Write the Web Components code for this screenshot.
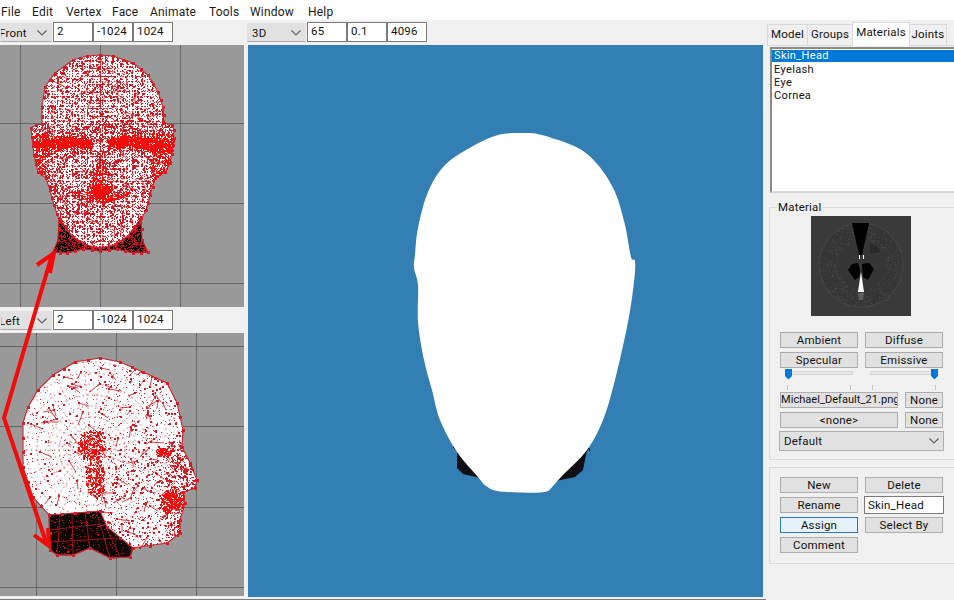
<!DOCTYPE html>
<html>
<head>
<meta charset="utf-8">
<title>Milkshape</title>
<style>
  html, body { margin: 0; height: 100%; overflow: hidden; background: #f0f0f0; }
</style>
</head>
<body>
<app-window>
  <menu-bar slot="menu" items="File,Edit,Vertex,Face,Animate,Tools,Window,Help"></menu-bar>

  <view-toolbar slot="left">
    <combo-box label="Front" width="52" cut></combo-box>
    <num-field value="2"></num-field><num-field value="-1024"></num-field><num-field value="1024"></num-field>
  </view-toolbar>
  <mesh-view slot="left" kind="front" style="height:262px"></mesh-view>
  <view-toolbar slot="left" style="height:26px;padding-top:3px">
    <combo-box label="Left" width="52" cut></combo-box>
    <num-field value="2"></num-field><num-field value="-1024"></num-field><num-field value="1024"></num-field>
  </view-toolbar>
  <mesh-view slot="left" kind="side" style="height:263px"></mesh-view>

  <view-toolbar slot="center">
    <combo-box label="3D" width="59" style="margin-left:-1px"></combo-box>
    <num-field value="65"></num-field><num-field value="0.1"></num-field><num-field value="4096"></num-field>
  </view-toolbar>
  <head-preview slot="center"></head-preview>

  <side-panel slot="right">
    <tab-strip tabs="Model,Groups,Materials,Joints" active="Materials"></tab-strip>
    <list-box items="Skin_Head,Eyelash,Eye,Cornea" selected="Skin_Head"></list-box>
    <group-box legend="Material" style="margin-top:8px">
      <texture-thumb></texture-thumb>
      <button-grid style="margin-top:16px">
        <push-button>Ambient</push-button><push-button>Diffuse</push-button>
        <push-button>Specular</push-button><push-button>Emissive</push-button>
      </button-grid>
      <button-grid gap="0">
        <track-slider value="0"></track-slider><track-slider value="1"></track-slider>
      </button-grid>
      <button-grid cols="118px 38px">
        <push-button fit>Michael_Default_21.png</push-button><push-button>None</push-button>
        <push-button>&lt;none&gt;</push-button><push-button>None</push-button>
      </button-grid>
      <combo-box label="Default" width="165" style="margin:3px 0 8px -1px"></combo-box>
    </group-box>
    <group-box style="margin-top:7px;--pad:9px 0 10px 10px">
      <button-grid>
        <push-button>New</push-button><push-button>Delete</push-button>
        <push-button>Rename</push-button><num-field value="Skin_Head" width="80" style="height:18px;margin:-1px"></num-field>
        <push-button focused>Assign</push-button><push-button>Select By</push-button>
        <push-button>Comment</push-button>
      </button-grid>
    </group-box>
  </side-panel>

  <arrow-overlay slot="overlay"></arrow-overlay>
</app-window>

<script>
const UI_FONT = 'Roboto, "Liberation Sans", sans-serif';

function shadow(el, html) {
  el.attachShadow({ mode: 'open' }).innerHTML = html;
}

// little seeded generator so the wireframe is the same on every load
function seeded(a) {
  return () => {
    a = (a + 0x6D2B79F5) | 0;
    let t = Math.imul(a ^ (a >>> 15), 1 | a);
    t = (t + Math.imul(t ^ (t >>> 7), 61 | t)) ^ t;
    return ((t ^ (t >>> 14)) >>> 0) / 4294967296;
  };
}

function inside(poly, x, y) {
  let hit = false;
  for (let i = 0, j = poly.length - 1; i < poly.length; j = i++) {
    const [xi, yi] = poly[i], [xj, yj] = poly[j];
    if ((yi > y) !== (yj > y) && x < (xj - xi) * (y - yi) / (yj - yi) + xi) hit = !hit;
  }
  return hit;
}

function polyPath(poly) {
  return 'M' + poly.map(p => p.join(' ')).join('L') + 'Z';
}

function smoothPath(p) {
  const n = p.length;
  let d = `M${p[0][0]} ${p[0][1]}`;
  for (let i = 0; i < n; i++) {
    const a = p[(i - 1 + n) % n], b = p[i], c = p[(i + 1) % n], e = p[(i + 2) % n];
    d += `C${(b[0] + (c[0] - a[0]) / 6).toFixed(1)} ${(b[1] + (c[1] - a[1]) / 6).toFixed(1)} ` +
         `${(c[0] - (e[0] - b[0]) / 6).toFixed(1)} ${(c[1] - (e[1] - b[1]) / 6).toFixed(1)} ${c[0]} ${c[1]}`;
  }
  return d + 'Z';
}

const blob = (x, y, cx, cy, rx, ry) => ((x - cx) / rx) ** 2 + ((y - cy) / ry) ** 2 < 1;

const FRONT = {
  grid: { xs: [20, 100, 180], ys: [123, 203, 283] },
  box: '0 45 244 262',
  head: [[100,55],[113,56],[133,63],[148,75],[158,92],[163,107],[164,123],[172,125],[174,130],[173,145],[170,163],[165,172],[155,178],[150,195],[146,210],[140,222],[128,236],[115,245],[100,248],[85,245],[72,236],[60,222],[54,205],[50,190],[46,178],[38,172],[34,155],[31,128],[36,125],[42,124],[42,107],[45,87],[55,73],[73,60],[87,56]],
  neck: [[59,218],[72,236],[85,245],[100,248],[115,245],[128,236],[141,218],[142,240],[148,252],[133,253],[117,249],[100,251],[83,249],[67,253],[53,252],[58,240]],
  neckDots: 0.42,
  solid: 0.9,
  density(x, y) {
    let d = y < 120 ? 0.21 : 0.33;
    if ((x < 50 || x > 150) && y > 122 && y < 180) d = 0.66;
    if (y > 122 && y < 134) d = 0.45;
    // brow band, two arcs that leave the bridge of the nose lighter
    const slant = 141 + Math.abs(Math.abs(x - 100) - 30) * 0.12;
    const band = Math.exp(-(((y - slant) / 6) ** 2));
    const off = Math.abs(x - 100);
    d += (off < 9 ? 0.05 : off > 56 ? 0.4 : 1.1) * band;
    if (blob(x, y, 72, 172, 12, 14) || blob(x, y, 128, 172, 12, 14)) d = 0.22;
    if (blob(x, y, 100, 158, 7, 10)) d = 0.5;
    if (Math.abs(x - 100) < (y - 158) * 0.45 && y > 158 && y < 196) d = Math.max(d, 0.72);
    if (blob(x, y, 100, 190, 10, 7)) d = 1.1;
    const arc = 199 - ((x - 100) / 30) ** 2 * 6;
    if (Math.abs(x - 100) < 30 && Math.abs(y - arc) < 2.5) d = Math.max(d, 0.85);
    if (y > 212) d = 0.3;
    return d;
  },
  web(clip) {
    let d = '';
    for (let y = 56; y < 250; y += 5) d += `M30 ${y}H176`;
    for (let x = 32; x < 176; x += 5) d += `M${x} 55V250`;
    return `<path d="${d}" clip-path="${clip}" fill="none" stroke="#d4141c" stroke-dasharray="1 2" shape-rendering="crispEdges"/>`;
  },
  neckWeb: '',
  extra(add) {
    for (let y = 57; y < 245; y += 1) add(100, y);
    for (let y = 68; y < 130; y += 8) for (let x = 88; x < 112; x += 1) add(x, y);
  },
  segs: 120,
  gain: 1,
  nodeStep: 9,
};

const SIDE = {
  grid: { xs: [36, 116, 196], ys: [346, 426, 507, 587] },
  box: '0 333 244 263',
  head: [[100,358],[120,362],[143,372],[167,383],[177,403],[183,430],[182,447],[190,463],[197,480],[195,488],[183,492],[185,503],[180,520],[180,533],[167,543],[133,548],[130,557],[110,558],[90,548],[73,555],[57,555],[50,550],[49,515],[33,497],[23,467],[23,423],[28,407],[38,390],[53,375],[75,362]],
  neck: [[49,515],[75,513],[100,511],[107,527],[133,548],[130,557],[110,558],[90,548],[73,555],[57,555],[50,550]],
  neckDots: 0.05,
  solid: 0.7,
  density(x, y) {
    let d = x < 100 ? 0.025 : 0.06;
    if (x > 110 && y > 460) d = 0.13;
    if (x > 165 && y > 440) d = 0.4;
    if (blob(x, y, 91, 445, 14, 16)) d = 0.7;
    if (blob(x, y, 95, 478, 10, 20)) d = 0.7;
    if (blob(x, y, 163, 452, 8, 5)) d = 1.2;
    if (blob(x, y, 172, 502, 12, 14)) d = 1;
    if (blob(x, y, 175, 525, 10, 16)) d = 0.42;
    if (blob(x, y, 178, 470, 10, 18)) d = 0.5;
    return d;
  },
  web(clip) {
    let d = '';
    for (let i = 0; i < 34; i++) {
      const a = i / 34 * Math.PI * 2;
      d += `M92 450L${(92 + Math.cos(a) * 150).toFixed(0)} ${(450 + Math.sin(a) * 150).toFixed(0)}`;
    }
    for (let r = 22; r < 120; r += 11) d += `M${92 - r} 450a${r} ${r} 0 1 0 ${2 * r} 0a${r} ${r} 0 1 0 -${2 * r} 0`;
    return `<path d="${d}" clip-path="${clip}" fill="none" stroke="#d02830" stroke-width=".9" stroke-dasharray="1.2 3.4"/>`;
  },
  neckWeb: 'M60 515 57 555M72 514 73 555M85 512 90 548M96 511 110 558M106 527 120 557M50 530 100 524M50 542 118 538',
  extra() {},
  segs: 150,
  gain: 0.85,
  nodeStep: 16,
};

class AppWindow extends HTMLElement {
  connectedCallback() {
    shadow(this, `
      <style>
        :host { display: block; position: relative; width: 954px; height: 600px; overflow: hidden;
                font: 12px ${UI_FONT}; color: #111; background: #f0f0f0; }
        .main { display: grid; grid-template-columns: 766px 188px; height: 580px; }
        .work { display: grid; grid-template-columns: 248px 518px; height: 579px; border-bottom: 1px solid #7d7d7d; }
        .col { display: flex; flex-direction: column; min-width: 0; }
      </style>
      <slot name="menu"></slot>
      <div class="main">
        <div class="work">
          <div class="col"><slot name="left"></slot></div>
          <div class="col"><slot name="center"></slot></div>
        </div>
        <div class="col"><slot name="right"></slot></div>
      </div>
      <slot name="overlay"></slot>`);
  }
}

class MenuBar extends HTMLElement {
  connectedCallback() {
    const gaps = [1, 32, 66, 112, 150, 209, 250, 308];
    const items = this.getAttribute('items').split(',');
    const spans = items.map((t, i) => {
      const next = i < items.length - 1 ? gaps[i + 1] - gaps[i] : 40;
      return `<span style="width:${next}px">${t}</span>`;
    }).join('');
    shadow(this, `
      <style>
        :host { display: flex; height: 20px; background: #fff; padding: 3px 0 0 1px; box-sizing: border-box;
                align-items: center; font-size: 12px; letter-spacing: .2px; color: #1a1a1a; }
        span { display: block; flex: none; }
      </style>${spans}`);
  }
}

class ViewToolbar extends HTMLElement {
  connectedCallback() {
    shadow(this, `
      <style>
        :host { display: flex; height: 25px; box-sizing: border-box; padding-top: 2px; flex: none; background: #f0f0f0; }
        ::slotted(combo-box) { margin-right: 1px; margin-top: 1px; }
      </style><slot></slot>`);
  }
}

class ComboBox extends HTMLElement {
  connectedCallback() {
    const w = this.getAttribute('width');
    const cut = this.hasAttribute('cut');
    shadow(this, `
      <style>
        :host { display: flex; width: ${w}px; height: 19px; flex: none; box-sizing: border-box; align-items: center;
                background: #e1e1e1; border: 1px solid #e1e1e1; border-bottom-color: #adadad; font-size: 11.5px;
                padding-left: ${cut ? 0 : 4}px; justify-content: space-between; overflow: hidden; letter-spacing: .2px; }
        :host([width="165"]) { height: 20px; border-color: #adadad; }
        span { margin-left: ${cut ? -2 : 0}px; }
        svg { flex: none; margin-right: 3px; }
      </style>
      <span>${this.getAttribute('label')}</span>
      <svg width="12" height="8" viewBox="0 0 12 8"><path d="M1.5 1.5 6 6l4.5-4.5" fill="none" stroke="#606060" stroke-width="1.1"/></svg>`);
  }
}

class NumField extends HTMLElement {
  connectedCallback() {
    const w = this.getAttribute('width') || 40;
    shadow(this, `
      <style>
        :host { display: block; width: ${w}px; height: 20px; flex: none; box-sizing: border-box; background: #fff;
                border: 1px solid #7a7a7a; font-size: 11.5px; line-height: 17px; padding-left: 3px; letter-spacing: .2px; color: #111; }
      </style>${this.getAttribute('value')}`);
  }
}

class MeshView extends HTMLElement {
  connectedCallback() {
    const kind = this.getAttribute('kind');
    const cfg = kind === 'front' ? FRONT : SIDE;
    const rnd = seeded(kind === 'front' ? 11 : 29);
    const [bx, by, bw, bh] = cfg.box.split(' ').map(Number);
    const xs = cfg.head.map(p => p[0]), ys = cfg.head.map(p => p[1]);
    const x0 = Math.min(...xs), x1 = Math.max(...xs), y0 = Math.min(...ys), y1 = Math.max(...ys);
    let dark = '', bright = '', lines = '', neckDots = '';
    const dot = (x, y, s) => `M${x} ${y}h${s}v${s}h-${s}z`;
    for (let y = y0; y <= y1 + 6; y++) {
      for (let x = x0; x <= x1; x++) {
        const onNeck = inside(cfg.neck, x, y);
        if (!inside(cfg.head, x, y) && !onNeck) continue;
        if (onNeck) {
          // the neck is black with a red web on it
          if (rnd() < cfg.neckDots) neckDots += dot(x, y, 1);
          continue;
        }
        const d = cfg.density(x, y);
        const lattice = y % 3 === 0 || x % 3 === 0;
        const chance = d >= 1 ? cfg.solid : d * (lattice ? 0.95 : 0.45) * cfg.gain;
        if (rnd() >= chance) continue;
        const s = rnd() < 0.22 ? 2 : 1;
        if (d > 0.55) bright += dot(x, y, s); else dark += dot(x, y, s);
      }
    }
    cfg.extra((x, y) => { if (rnd() < 0.75) dark += dot(x, y, 1); });
    for (let i = 0; i < cfg.segs; i++) {
      const x = x0 + rnd() * (x1 - x0), y = y0 + rnd() * (y1 - y0);
      if (!inside(cfg.head, x, y)) continue;
      const a = rnd() * Math.PI, l = 3 + rnd() * 11;
      const ex = x + Math.cos(a) * l, ey = y + Math.sin(a) * l;
      if (!inside(cfg.head, ex, ey) || inside(cfg.neck, x, y)) continue;
      lines += `M${x.toFixed(0)} ${y.toFixed(0)}L${ex.toFixed(0)} ${ey.toFixed(0)}`;
      dark += dot(Math.round(x) - 1, Math.round(y) - 1, 2);
    }
    // nodes along the silhouette, a step of a few pixels
    let nodes = '';
    [cfg.head, cfg.neck].forEach(poly => poly.forEach((p, i) => {
      const q = poly[(i + 1) % poly.length];
      const n = Math.max(1, Math.round(Math.hypot(q[0] - p[0], q[1] - p[1]) / cfg.nodeStep));
      for (let k = 0; k < n; k++) {
        nodes += dot(Math.round(p[0] + (q[0] - p[0]) * k / n) - 1, Math.round(p[1] + (q[1] - p[1]) * k / n) - 1, 3);
      }
    }));
    const grid = cfg.grid.xs.map(x => `<path d="M${x + .5} ${by}V${by + bh}"/>`).join('') +
                 cfg.grid.ys.map(y => `<path d="M0 ${y + .5}H${bw}"/>`).join('');
    shadow(this, `
      <style>
        :host { display: block; flex: none; width: 244px; background: #999; }
        svg { display: block; width: 100%; height: 100%; }
      </style>
      <svg viewBox="${cfg.box}">
        <defs><clipPath id="shape"><path d="${polyPath(cfg.head)}"/></clipPath></defs>
        <g stroke="#666" fill="none" shape-rendering="crispEdges">${grid}</g>
        <path d="${polyPath(cfg.head)}" fill="#fff"/>
        ${cfg.web('url(#shape)')}
        <path d="${polyPath(cfg.neck)}" fill="#0d0606"/>
        <path d="${cfg.neckWeb}" fill="none" stroke="#a8151c" stroke-width=".9"/>
        <path d="${polyPath(cfg.head)}" fill="none" stroke="#cf1f28" stroke-width="1.1"/>
        <path d="${polyPath(cfg.neck)}" fill="none" stroke="#cf1f28" stroke-width="1.1"/>
        <path d="${neckDots}" fill="#c2141c" shape-rendering="crispEdges"/>
        <path d="${lines}" fill="none" stroke="#cf2b32" stroke-width=".9"/>
        <path d="${dark}" fill="#cf1a22" shape-rendering="crispEdges"/>
        <path d="${bright}" fill="#f60a0a" shape-rendering="crispEdges"/>
        <path d="${nodes}" fill="#cf1f28" shape-rendering="crispEdges"/>
      </svg>`);
  }
}

class HeadPreview extends HTMLElement {
  connectedCallback() {
    const head = [[522,133],[498,135],[473,146],[445,165],[428,192],[418,228],[415,255],[414,268],[418,285],[418,322],[424,360],[432,390],[440,420],[457,452],[478,477],[486,486],[497,491],[520,492.5],[545,492],[553,486],[562,476],[587,450],[603,420],[615,380],[628,322],[634,282],[635,261],[631,257],[625,225],[615,192],[598,165],[578,148],[542,135]];
    shadow(this, `
      <style>
        :host { display: block; flex: none; width: 515px; height: 552px; background: #337eb2;
                border-right: 1px solid #dcebf5; box-sizing: content-box; }
        svg { display: block; width: 515px; height: 552px; }
      </style>
      <svg viewBox="248 45 515 552">
        <path d="M450 440 457 452 457 468 463 474 480 478 470 440ZM587 450 583 470 575 477 556 481 570 440Z" fill="#0e1014"/>
        <path d="M456 450l-3-3 2-2M586 452l3-4 1 3" stroke="#0e1014" fill="none"/>
        <path d="${smoothPath(head)}" fill="#fff"/>
      </svg>`);
  }
}

class SidePanel extends HTMLElement {
  connectedCallback() {
    shadow(this, `
      <style>
        :host { display: flex; flex-direction: column; padding: 2px 0 0 3px; box-sizing: border-box; height: 580px; background: #f0f0f0; }
      </style><slot></slot>`);
  }
}

class TabStrip extends HTMLElement {
  connectedCallback() {
    const widths = { Model: 41, Groups: 46, Materials: 58, Joints: 38 };
    const active = this.getAttribute('active');
    const tabs = this.getAttribute('tabs').split(',').map(t =>
      `<span class="${t === active ? 'on' : ''}" style="width:${widths[t]}px">${t}</span>`).join('');
    shadow(this, `
      <style>
        :host { display: flex; height: 23px; align-items: flex-end; border-bottom: 1px solid #d9d9d9; flex: none;
                margin-left: -2px; font-size: 11.5px; letter-spacing: .2px; box-sizing: content-box; }
        span { box-sizing: border-box; height: 21px; border: 1px solid #d9d9d9; border-bottom: 0; margin-right: -1px;
               text-align: center; line-height: 19px; background: #f0f0f0; position: relative; }
        .on { background: #fff; line-height: 18px; margin-bottom: -1px; height: 24px; z-index: 1; }
      </style>${tabs}`);
  }
}

class ListBox extends HTMLElement {
  connectedCallback() {
    const sel = this.getAttribute('selected');
    const rows = this.getAttribute('items').split(',').map(t =>
      `<div class="${t === sel ? 'sel' : ''}">${t}</div>`).join('');
    shadow(this, `
      <style>
        :host { display: block; height: 146px; margin: 1px -4px 0 1px; box-sizing: border-box; flex: none; background: #fff;
                border: 2px solid; border-color: #8a8a8a #e8e8e8 #d8d8d8 #8a8a8a; box-shadow: inset 1px 1px 0 #fff;
                padding-top: 1px; font-size: 11px; letter-spacing: .35px; color: #111; }
        div { height: 13px; line-height: 13px; padding-left: 2px; }
        .sel { background: #0078d7; color: #fff; height: 12px; line-height: 12px; margin-bottom: 1px; }
      </style>${rows}`);
  }
}

class GroupBox extends HTMLElement {
  connectedCallback() {
    const legend = this.getAttribute('legend');
    shadow(this, `
      <style>
        :host { display: block; flex: none; margin-right: -4px; }
        fieldset { margin: 0; border: 1px solid #dcdcdc; padding: var(--pad, 2px 0 0 10px); min-width: 0; }
        legend { font-size: 11.5px; line-height: 13px; padding: 0 1px; margin-left: -3px; letter-spacing: .2px; }
      </style>
      <fieldset>${legend ? `<legend>${legend}</legend>` : ''}<slot></slot></fieldset>`);
  }
}

class ButtonGrid extends HTMLElement {
  connectedCallback() {
    const cols = this.getAttribute('cols') || '78px 78px';
    const gap = this.getAttribute('gap') || '4';
    shadow(this, `
      <style>
        :host { display: grid; grid-template-columns: ${cols}; gap: ${gap}px 7px; width: 163px; }
      </style><slot></slot>`);
  }
}

class PushButton extends HTMLElement {
  connectedCallback() {
    shadow(this, `
      <style>
        :host { display: block; height: 16px; box-sizing: border-box; background: #e1e1e1; border: 1px solid #adadad;
                font-size: 11.5px; line-height: 14px; letter-spacing: .2px; text-align: center; overflow: hidden; white-space: nowrap; color: #111; }
        :host([focused]) { background: #e5f1fb; border-color: #2b7aa8; }
        :host([fit]) { font-size: 11px; letter-spacing: .05px; }
      </style><slot></slot>`);
  }
}

class TrackSlider extends HTMLElement {
  connectedCallback() {
    const v = Number(this.getAttribute('value'));
    shadow(this, `
      <style>
        :host { display: block; position: relative; height: 24px; }
        .track { position: absolute; left: 5px; top: 3px; width: 68px; background: #e7e7e7; border: 1px solid #d6d6d6; box-sizing: border-box; height: 4px; }
        .tick { position: absolute; top: 17px; width: 1px; height: 5px; background: #c4c4c4; }
        svg { position: absolute; top: 0; left: ${v ? 66 : 5}px; }
      </style>
      <div class="track"></div>
      <div class="tick" style="left:7px"></div><div class="tick" style="left:70px"></div>
      <svg width="7" height="12" viewBox="0 0 7 12"><path d="M0 1h7v7l-3.5 3.5L0 8z" fill="#0078d7"/></svg>`);
  }
}

class TextureThumb extends HTMLElement {
  connectedCallback() {
    const rnd = seeded(5);
    let speck = '';
    for (let i = 0; i < 650; i++) {
      const a = rnd() * Math.PI * 2, r = 24 + rnd() * 19;
      const x = 861 + Math.cos(a) * r, y = 265 + Math.sin(a) * r;
      speck += `M${x.toFixed(0)} ${y.toFixed(0)}h1v1h-1z`;
    }
    shadow(this, `
      <style>
        :host { display: block; width: 100px; height: 100px; margin-left: 31px; background: #3a3a3a; }
        svg { display: block; }
      </style>
      <svg width="100" height="100" viewBox="811 216 100 100">
        <circle cx="861" cy="265" r="42" fill="#363636" stroke="#444" stroke-width="1"/>
        <path d="${speck}" fill="#434343" shape-rendering="crispEdges"/>
        <path d="M870 244a11 8 0 0 1 10 8l-10 2z" fill="#2a2a2a"/>
        <path d="M852 223H869L862 255H859ZM848 270 852 264 858 263 860 270 859 277 855 280ZM862 264 869 263 874 269 868 280 863 277Z" fill="#020202"/>
        <path d="M861 272 864 292H858Z" fill="#fff"/>
        <path d="M859 255h1v4h-1zM863 255h1v4h-1z" fill="#fff"/>
        <path d="M858 293h6l-1 7h-4z" fill="#5e5e5e"/>
      </svg>`);
  }
}

class ArrowOverlay extends HTMLElement {
  connectedCallback() {
    shadow(this, `
      <style>
        :host { position: absolute; left: 0; top: 0; width: 954px; height: 600px; pointer-events: none; display: block; }
      </style>
      <svg width="954" height="600" viewBox="0 0 954 600">
        <path d="M51 258 4 418 47 545" fill="none" stroke="#f50a0a" stroke-width="4" stroke-linejoin="miter"/>
        <path d="M37 265 54 253 50 273M34 535 49 546 48 528" fill="none" stroke="#f50a0a" stroke-width="4"/>
      </svg>`);
  }
}

customElements.define('app-window', AppWindow);
customElements.define('menu-bar', MenuBar);
customElements.define('view-toolbar', ViewToolbar);
customElements.define('combo-box', ComboBox);
customElements.define('num-field', NumField);
customElements.define('mesh-view', MeshView);
customElements.define('head-preview', HeadPreview);
customElements.define('side-panel', SidePanel);
customElements.define('tab-strip', TabStrip);
customElements.define('list-box', ListBox);
customElements.define('group-box', GroupBox);
customElements.define('button-grid', ButtonGrid);
customElements.define('push-button', PushButton);
customElements.define('track-slider', TrackSlider);
customElements.define('texture-thumb', TextureThumb);
customElements.define('arrow-overlay', ArrowOverlay);
</script>
</body>
</html>
